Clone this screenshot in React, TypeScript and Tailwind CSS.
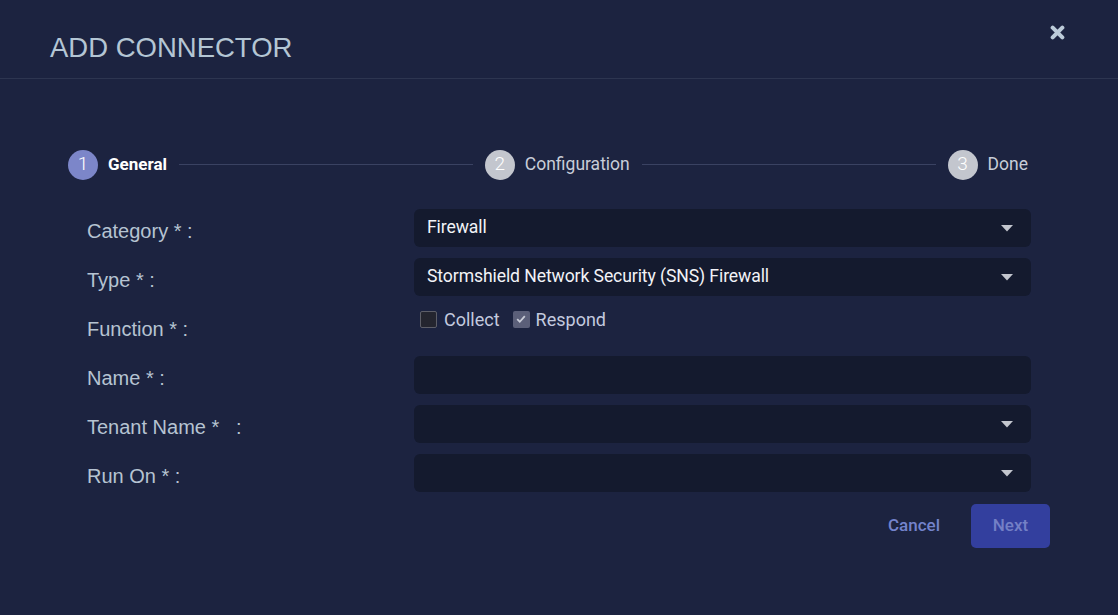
import React from "react";

const Arrow = () => (
  <svg width="12" height="7" viewBox="0 0 12 7" className="shrink-0">
    <path d="M0 0 L12 0 L6 6.5 Z" fill="#c3c6ce" />
  </svg>
);

function Select({ value }: { value?: string }) {
  return (
    <div className="w-[617px] h-[38px] rounded-[6px] bg-[#141a2e] flex items-center pl-[13px] pr-[18px]">
      <span className="flex-1 text-[17.6px] leading-[20px] pb-[3px] font-normal text-[#f2f3f7] font-['Roboto',sans-serif] tracking-[-0.1px]">
        {value}
      </span>
      <Arrow />
    </div>
  );
}

function Label({ children }: { children: React.ReactNode }) {
  return (
    <div className="w-[327px] pt-[12px] text-[20px] leading-[20px] text-[#b6c3d2] font-['Liberation_Sans',Arial,sans-serif] whitespace-pre">
      {children}
    </div>
  );
}

function Step({ n, label, active }: { n: number; label: string; active?: boolean }) {
  return (
    <div className="flex items-center shrink-0">
      <div
        className={`w-[30px] h-[30px] rounded-full flex items-center justify-center text-[19px] font-light text-white font-['Roboto',sans-serif] ${
          active ? "bg-[#7c86c9]" : "bg-[#c3c6ce]"
        }`}
      >
        {n}
      </div>
      <span
        className={`ml-[10px] font-['Roboto',sans-serif] ${
          active ? "text-[17px] font-bold text-white" : "text-[17.5px] text-[#c8cdd8]"
        }`}
      >
        {label}
      </span>
    </div>
  );
}

export default function App() {
  return (
    <div className="w-full h-[615px] bg-[#1c2340] relative overflow-hidden">
      <div className="h-[79px] border-b border-[#2d3550] pl-[50px] pt-[34px]">
        <div className="text-[27.5px] leading-[27px] text-[#b4c6d4] font-['Liberation_Sans',Arial,sans-serif]">
          ADD CONNECTOR
        </div>
      </div>
      <button className="absolute left-[1048px] top-[23px] w-[18px] h-[18px] flex items-center justify-center">
        <svg width="15" height="15" viewBox="0 0 14 14">
          <path d="M2.5 2.5 L11.5 11.5 M11.5 2.5 L2.5 11.5" stroke="#bccbd9" strokeWidth="3.8" strokeLinecap="round" />
        </svg>
      </button>

      <div className="flex items-center pl-[68px] pr-[90px] mt-[70px] h-[31px]">
        <Step n={1} label="General" active />
        <div className="flex-1 h-px bg-[#3a4262] mx-[12px]" />
        <Step n={2} label="Configuration" />
        <div className="flex-1 h-px bg-[#3a4262] mx-[12px]" />
        <Step n={3} label="Done" />
      </div>

      <div className="pl-[87px] pr-[68px] mt-[29px] flex flex-col gap-[11px]">
        <div className="flex">
          <Label>Category * :</Label>
          <Select value="Firewall" />
        </div>
        <div className="flex">
          <Label>Type * :</Label>
          <Select value="Stormshield Network Security (SNS) Firewall" />
        </div>
        <div className="flex h-[38px]">
          <Label>Function * :</Label>
          <div className="flex items-center h-[24px] pl-[6px] font-['Roboto',sans-serif] text-[18px] text-[#c3cadf]">
            <span className="w-[17px] h-[17px] rounded-[2px] border border-[#5d5e68] bg-[#24252f]" />
            <span className="ml-[7px]">Collect</span>
            <span className="ml-[13px] w-[17px] h-[17px] rounded-[2px] bg-[#5b5f79] flex items-center justify-center">
              <svg width="12" height="12" viewBox="0 0 12 12">
                <path d="M2.2 6.2 L4.8 8.8 L9.8 3.2" stroke="#c9ccd8" strokeWidth="1.8" fill="none" />
              </svg>
            </span>
            <span className="ml-[6px]">Respond</span>
          </div>
        </div>
        <div className="flex">
          <Label>Name * :</Label>
          <div className="w-[617px] h-[38px] rounded-[6px] bg-[#141a2e]" />
        </div>
        <div className="flex">
          <Label>{"Tenant Name *   :"}</Label>
          <Select />
        </div>
        <div className="flex">
          <Label>Run On * :</Label>
          <Select />
        </div>
        <div className="flex justify-end items-center mt-[1px]">
          <button className="text-[17px] font-medium text-[#7483cc] font-['Roboto',sans-serif] mr-[31px]">
            Cancel
          </button>
          <button className="w-[79px] h-[44px] rounded-[5px] bg-[#333f9e] text-[17px] font-medium text-[#7480c6] font-['Roboto',sans-serif]">
            Next
          </button>
        </div>
      </div>
    </div>
  );
}
